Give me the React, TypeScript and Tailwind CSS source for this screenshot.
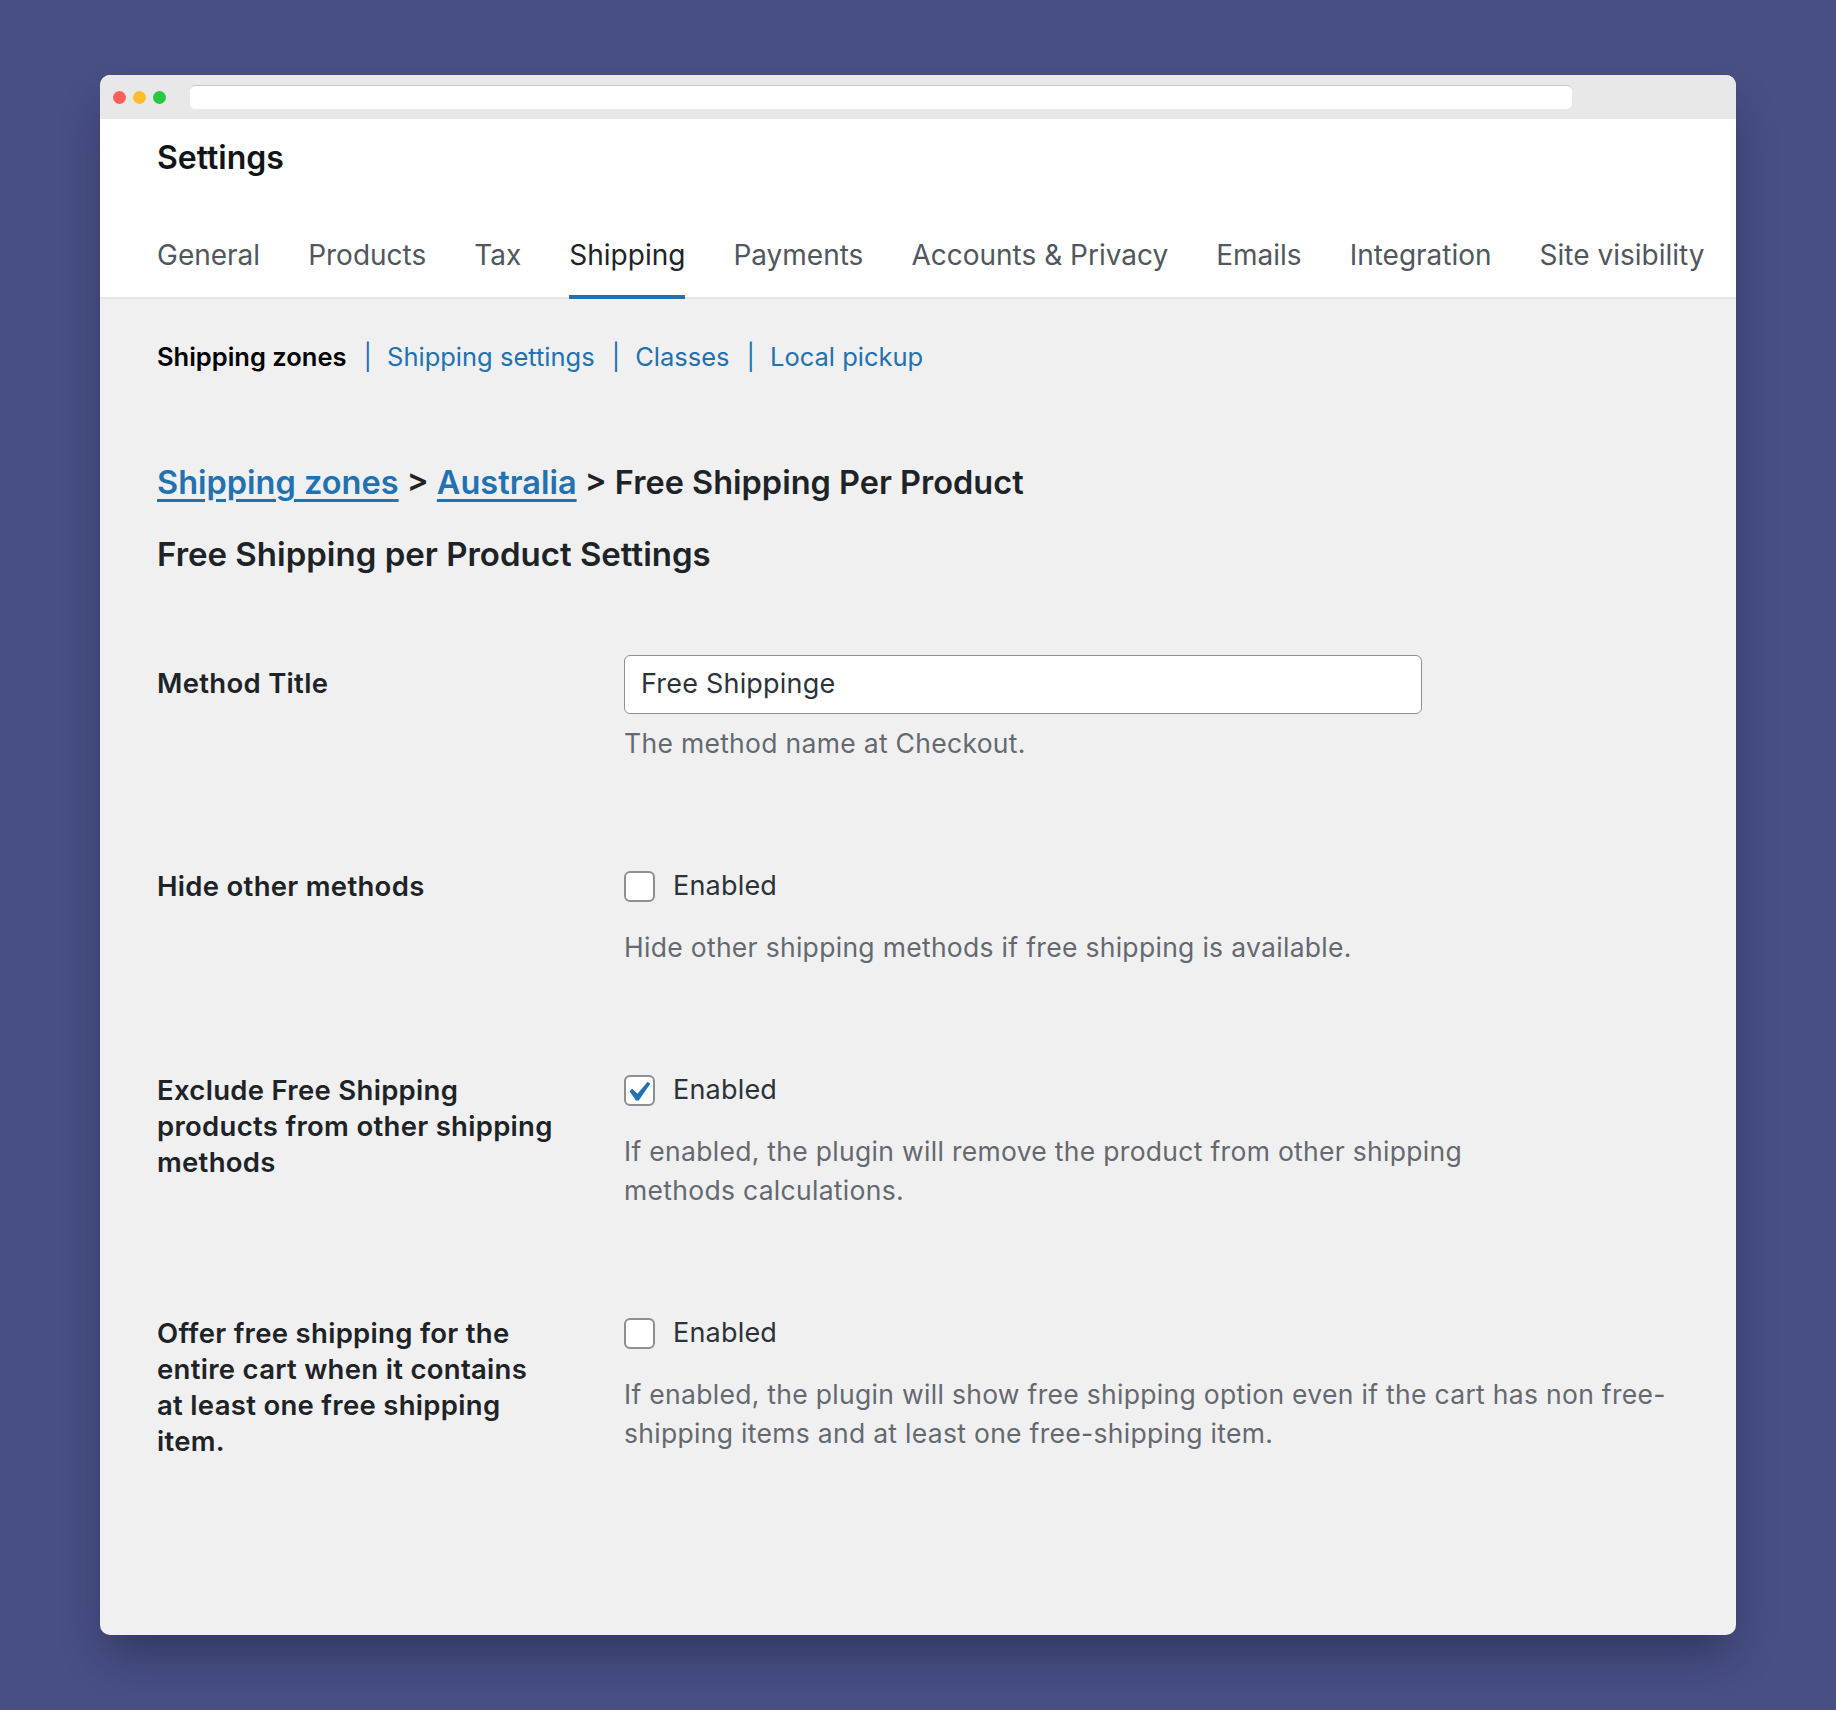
const TABS = ['General', 'Products', 'Tax', 'Shipping', 'Payments', 'Accounts & Privacy', 'Emails', 'Integration', 'Site visibility'];

const SUB_LINKS = ['Shipping settings', 'Classes', 'Local pickup'];

function Checkbox({ checked }: { checked?: boolean }) {
  return (
    <span className="flex h-[31px] w-[31px] shrink-0 items-center justify-center rounded-[6px] border-2 border-[#8c8f94] bg-white">
      {checked && (
        <svg width="22" height="20" viewBox="5.5 4.5 11 10" className="overflow-visible">
          <path d="M14.83 4.89l1.34.94-5.81 8.38H9.02L5.78 9.67l1.34-1.25 2.57 2.4z" fill="#2271b1" />
        </svg>
      )}
    </span>
  );
}

function CheckRow({ label, checked, desc }: { label: string[]; checked?: boolean; desc: string[] }) {
  return (
    <div className="mt-[105px] grid grid-cols-[467px_1fr]">
      <div className="text-[27.5px] leading-[36px] font-semibold tracking-[0.3px] text-[#1d2327]">
        {label.map((l, i) => (
          <div key={i}>{l}</div>
        ))}
      </div>
      <div>
        <label className="mt-[3px] flex h-[31px] items-center gap-[18px]">
          <Checkbox checked={checked} />
          <span className="text-[27px] tracking-[0.2px] text-[#2c3338]">Enabled</span>
        </label>
        <p className="mt-[26px] text-[26.5px] leading-[39px] tracking-[0.3px] text-[#646970]">
          {desc.map((d, i) => (
            <span key={i} className="block">
              {d}
            </span>
          ))}
        </p>
      </div>
    </div>
  );
}

export default function App() {
  return (
    <div className="h-[1710px] w-[1836px] bg-[#484f84] pl-[100px] pt-[75px] font-[Inter,sans-serif]">
      <div className="flex h-[1560px] w-[1636px] flex-col overflow-hidden rounded-[10px] bg-[#f0f0f1] shadow-[0_25px_45px_-8px_rgba(20,22,50,0.45)]">
        {/* title bar */}
        <div className="flex h-[44px] shrink-0 items-center bg-[#e8e8e8] pl-[13px]">
          <div className="flex gap-[7px]">
            <span className="h-[13px] w-[13px] rounded-full bg-[#ff5f57]" />
            <span className="h-[13px] w-[13px] rounded-full bg-[#febc2e]" />
            <span className="h-[13px] w-[13px] rounded-full bg-[#28c840]" />
          </div>
          <div className="ml-[24px] h-[24px] w-[1382px] rounded-[5px] border-t border-[#c8c8c8] bg-white" />
        </div>

        {/* header */}
        <div className="border-b-2 border-[#e4e4e4] bg-white pl-[57px] pt-[19px]">
          <h1 className="text-[32px] leading-[40px] font-semibold text-[#101517]">Settings</h1>
          <nav className="mt-[59px] -mb-[2px] flex gap-[48px]">
            {TABS.map((t) => {
              const active = t === 'Shipping';
              return (
                <a
                  key={t}
                  className={
                    active
                      ? 'border-b-4 border-[#2271b1] pb-[22px] text-[28px] leading-[36px] text-[#1d2327]'
                      : 'border-b-4 border-transparent pb-[22px] text-[28px] leading-[36px] text-[#50575e]'
                  }
                >
                  {t}
                </a>
              );
            })}
          </nav>
        </div>

        {/* content */}
        <div className="flex-1 pl-[57px] pr-[57px] pt-[43px]">
          <ul className="flex text-[25.5px] leading-[30px]">
            <li className="font-semibold text-[#000]">Shipping zones</li>
            {SUB_LINKS.map((l) => (
              <li key={l} className="flex text-[#2271b1]">
                <span className="ml-[17px] mr-[15px]">|</span>
                <a>{l}</a>
              </li>
            ))}
          </ul>

          <h2 className="mt-[91px] text-[32.5px] leading-[40px] font-semibold text-[#1d2327]">
            <a className="text-[#2271b1] underline underline-offset-[5px]">Shipping zones</a>
            {' > '}
            <a className="text-[#2271b1] underline underline-offset-[5px]">Australia</a>
            {' > Free Shipping Per Product'}
          </h2>

          <h3 className="mt-[33px] text-[33px] leading-[36px] font-semibold text-[#1d2327]">
            Free Shipping per Product Settings
          </h3>

          {/* method title */}
          <div className="mt-[83px] grid grid-cols-[467px_1fr]">
            <div className="pt-[10px] text-[27.5px] leading-[36px] font-semibold tracking-[0.3px] text-[#1d2327]">
              Method Title
            </div>
            <div>
              <div className="flex h-[59px] w-[798px] items-center rounded-[6px] border-[1.5px] border-[#8c8f94] bg-white pl-[16px] text-[27px] tracking-[0.2px] text-[#2c3338]">
                Free Shippinge
              </div>
              <p className="mt-[10px] text-[26.5px] leading-[39px] tracking-[0.3px] text-[#646970]">
                The method name at Checkout.
              </p>
            </div>
          </div>

          <CheckRow
            label={['Hide other methods']}
            desc={['Hide other shipping methods if free shipping is available.']}
          />
          <CheckRow
            checked
            label={['Exclude Free Shipping', 'products from other shipping', 'methods']}
            desc={['If enabled, the plugin will remove the product from other shipping', 'methods calculations.']}
          />
          <CheckRow
            label={['Offer free shipping for the', 'entire cart when it contains', 'at least one free shipping', 'item.']}
            desc={[
              'If enabled, the plugin will show free shipping option even if the cart has non free-',
              'shipping items and at least one free-shipping item.',
            ]}
          />
        </div>
      </div>
    </div>
  );
}
